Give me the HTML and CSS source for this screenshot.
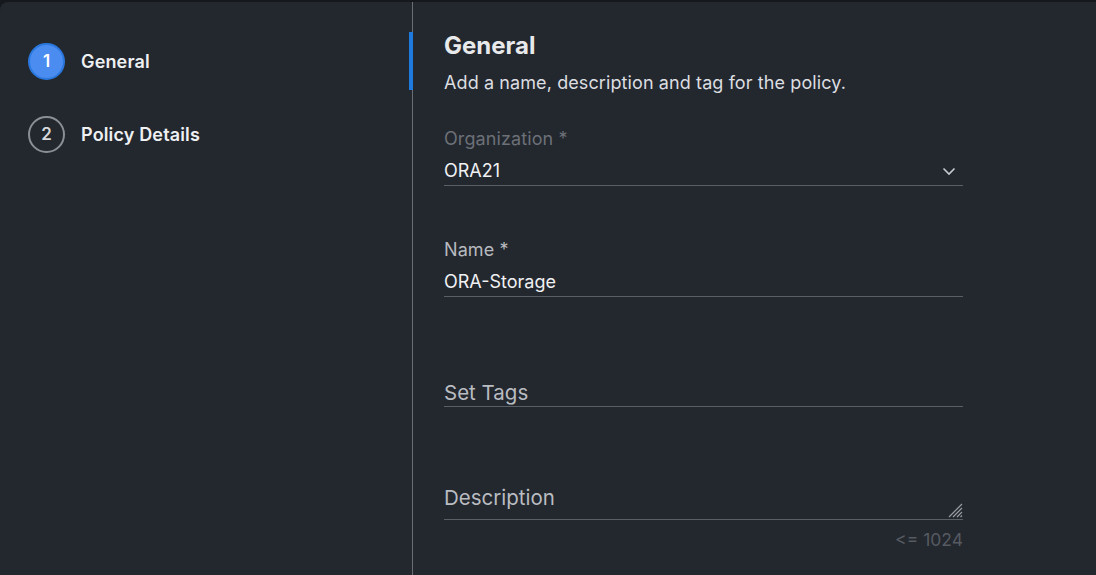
FILE: index.html
```html
<!DOCTYPE html>
<html lang="en">
<head>
<meta charset="utf-8">
<title>General</title>
<link rel="stylesheet" href="styles.css">
</head>
<body>
<div class="app">
  <aside class="sidebar">
    <div class="step step-active">
      <span class="step-num">1</span>
      <span class="step-label">General</span>
    </div>
    <div class="step">
      <span class="step-num">2</span>
      <span class="step-label">Policy Details</span>
    </div>
    <span class="indicator"></span>
  </aside>
  <main class="main">
    <h1 class="title">General</h1>
    <p class="subtitle">Add a name, description and tag for the policy.</p>

    <div class="field field-org">
      <div class="label label-disabled">Organization *</div>
      <div class="value-row">
        <span class="value">ORA21</span>
        <svg class="chevron" width="14" height="9" viewBox="0 0 14 9"><path d="M1.5 1.5 L7 7 L12.5 1.5" fill="none" stroke="#c8cbd0" stroke-width="1.6"/></svg>
      </div>
    </div>

    <div class="field field-name">
      <div class="label">Name *</div>
      <div class="value-row">
        <span class="value">ORA-Storage</span>
      </div>
    </div>

    <div class="field field-tags">
      <div class="placeholder-row">Set Tags</div>
    </div>

    <div class="field field-desc">
      <div class="textarea-row">
        <span class="placeholder">Description</span>
        <svg class="resize" width="18" height="18" viewBox="0 0 18 18"><path d="M17 4 L4 17 M17 8 L8 17 M17 12 L12 17 M17 15.5 L15.5 17" stroke="#9a9ea4" stroke-width="1.2" fill="none"/></svg>
      </div>
      <div class="counter">&lt;= 1024</div>
    </div>
  </main>
</div>
</body>
</html>
```
FILE: styles.css
```css
* { box-sizing: border-box; }
html, body {
  margin: 0;
  padding: 0;
  background: #15181c;
}
body {
  font-family: Inter, "Noto Sans", "Liberation Sans", sans-serif;
  color: #e6e7e9;
}
.app {
  display: flex;
  height: 575px;
  margin-top: 2px;
  background: #23272e;
  border-top-left-radius: 8px;
  overflow: hidden;
}
.sidebar {
  position: relative;
  width: 413px;
  flex: none;
  border-right: 1px solid #6a6e74;
  padding: 41px 0 0 28px;
  display: flex;
  flex-direction: column;
  gap: 37px;
}
.indicator {
  position: absolute;
  right: -1px;
  top: 30px;
  width: 4px;
  height: 58px;
  background: #1f7ae0;
}
.step {
  display: flex;
  align-items: center;
  gap: 16px;
  height: 36px;
}
.step-num {
  width: 37px;
  height: 37px;
  border-radius: 50%;
  border: 2px solid #8a8e95;
  display: flex;
  align-items: center;
  justify-content: center;
  font-size: 17px;
  font-weight: 600;
  color: #d6d8dc;
}
.step-active .step-num {
  background: #4a8cf0;
  border-color: #2a78de;
  color: #ffffff;
}
.step-label {
  font-size: 18px;
  font-weight: 600;
  letter-spacing: 0.15px;
  color: #eef0f2;
}
.main {
  flex: 1;
  padding-left: 31px;
}
.title {
  margin: 30px 0 0;
  font-size: 24px;
  line-height: 28px;
  font-weight: 700;
  color: #e8e9eb;
}
.subtitle {
  margin: 11px 0 0;
  font-size: 18px;
  line-height: 24px;
  letter-spacing: 0.1px;
  color: #dcdee1;
}
.field {
  width: 519px;
}
.field-org { margin-top: 32px; }
.field-name { margin-top: 52px; }
.field-tags { margin-top: 83px; }
.field-desc { margin-top: 78px; }
.label {
  font-size: 18px;
  line-height: 24px;
  letter-spacing: 0.1px;
  color: #b7babf;
}
.label-disabled {
  color: #6c7077;
}
.value-row {
  margin-top: 8px;
  display: flex;
  align-items: center;
  justify-content: space-between;
  height: 27px;
  padding-bottom: 2px;
  border-bottom: 1px solid #5a5e65;
}
.value {
  font-size: 18px;
  line-height: 24px;
  color: #f0f1f3;
}
.chevron {
  margin-right: 7px;
}
.placeholder-row {
  font-size: 20.5px;
  line-height: 26px;
  height: 27px;
  color: #b9bcc1;
  border-bottom: 1px solid #5a5e65;
}
.textarea-row {
  display: flex;
  justify-content: space-between;
  align-items: flex-start;
  height: 35px;
  border-bottom: 1px solid #5a5e65;
}
.placeholder {
  font-size: 20.5px;
  line-height: 26px;
  color: #b9bcc1;
}
.resize {
  align-self: flex-end;
  margin-bottom: 1px;
}
.counter {
  margin-top: 9px;
  text-align: right;
  font-size: 17.5px;
  line-height: 22px;
  color: #565a61;
}
```
